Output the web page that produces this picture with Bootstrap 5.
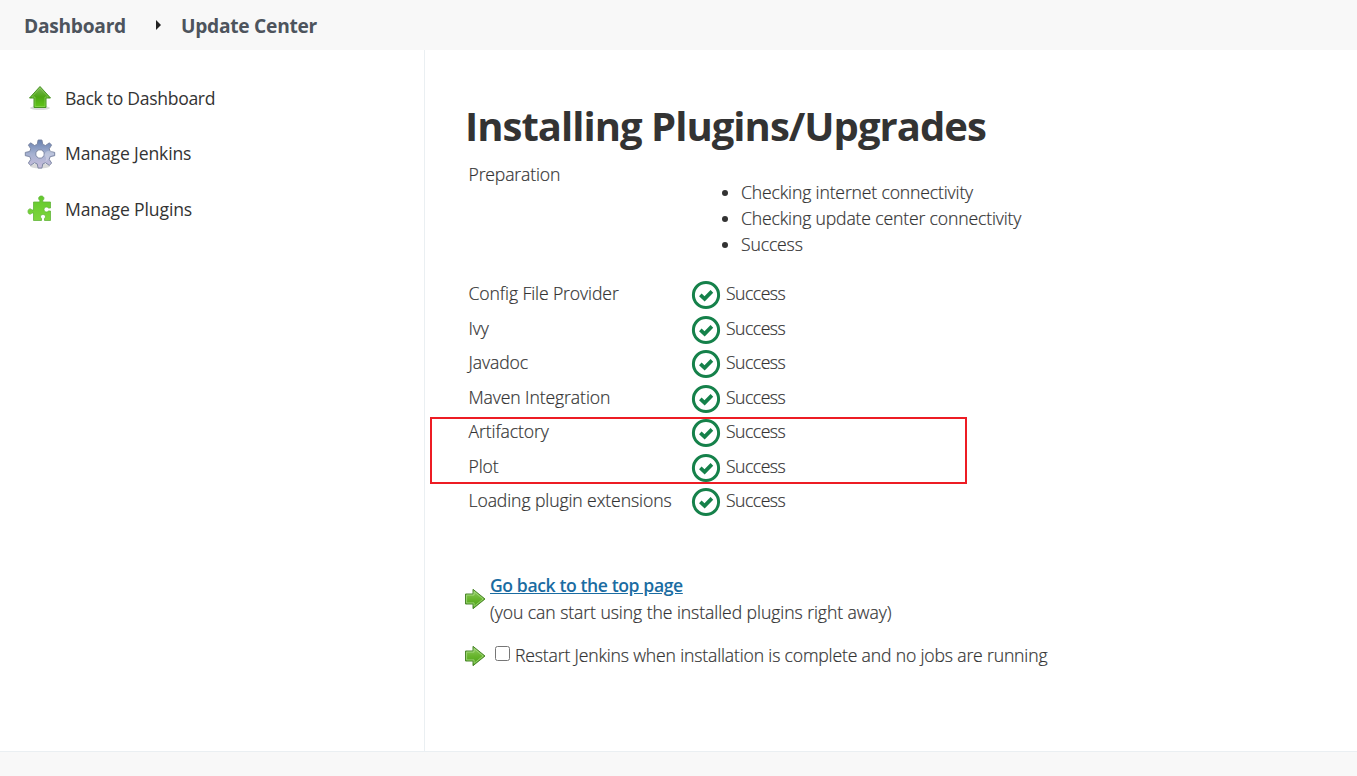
<!DOCTYPE html>
<html lang="en">
<head>
<meta charset="utf-8">
<title>Update Center [Jenkins]</title>
<meta name="viewport" content="width=device-width, initial-scale=1">
<link href="https://cdn.jsdelivr.net/npm/bootstrap@5.3.0/dist/css/bootstrap.min.css" rel="stylesheet">
<style>
body{font-family:"Open Sans","Noto Sans",sans-serif;font-size:17.6px;font-weight:300;letter-spacing:-.15px;line-height:26px;color:#333;background:#fff;height:100vh;overflow:hidden}
.content{-webkit-text-stroke:.2px}
.content h1,.next a{-webkit-text-stroke:0}
.crumbs{height:50px;background:#f8f8f8;font-size:19.2px;font-weight:700;padding:2px 0 0 24px;letter-spacing:-.27px}
.crumbs a{color:#4d545d;text-decoration:none}
.caret{margin:0 20px 0 30px;display:block;position:relative;top:-1px}
.side{width:425px;border-right:1px solid #eaeff2;padding:21px 0 0 24px}
.task{height:55.5px;color:#333;text-decoration:none;gap:9px}
.task svg{width:32px;height:32px;flex:none}
.task span{font-weight:530;margin-top:-2px}
.task:first-child span{letter-spacing:-.32px;margin-top:-1px}
.content{padding:47px 0 0 40px}
h1{font-size:40px;font-weight:700;line-height:58px;letter-spacing:-.98px;color:#333;margin:0 0 6px;white-space:nowrap}
.status{padding-left:3.5px}
.label-cell{width:223.5px;flex:none;white-space:nowrap}
.prep{height:119px}
.prep ul{margin:18px 0 0;padding-left:49px}
.job{height:34.5px}
.job .label-cell{letter-spacing:-.1px}
.job svg{width:30px;height:30px;margin:0 5px 0 -1px;flex:none}
.job span{letter-spacing:-.5px}
.marked{position:relative}
.marked::after{content:"";position:absolute;left:-38.5px;top:-1px;width:537px;height:67px;border:2px solid #ed1c24}
.next{margin-left:-1px}
.next svg{width:22px;height:22px;flex:none}
.next a{color:#1a6ca2;font-weight:600;letter-spacing:-.4px}
.next input{width:15px;height:15px;margin:0 5px 5px 9px}
.next label{padding-bottom:2px;letter-spacing:-.16px}
.top-page{margin-top:50.5px;line-height:27px;letter-spacing:-.07px}
.restart{margin-top:15.5px}
.foot{height:25px;background:#f8f8f8;border-top:1px solid #eaeff2}
</style>
</head>
<body class="d-flex flex-column">
<svg width="0" height="0" class="position-absolute" aria-hidden="true">
<defs>
<linearGradient id="leaf" x1="0" y1="0" x2="0" y2="1"><stop offset="0" stop-color="#80b85c"/><stop offset=".5" stop-color="#4ca613"/><stop offset="1" stop-color="#63c71a"/></linearGradient>
<linearGradient id="steel" x1="0" y1="0" x2="0" y2="1"><stop offset="0" stop-color="#667fae"/><stop offset=".5" stop-color="#a5b1d1"/><stop offset="1" stop-color="#c9bddb"/></linearGradient>
<linearGradient id="lime" x1="0" y1="0" x2="0" y2="1"><stop offset="0" stop-color="#62c82b"/><stop offset="1" stop-color="#7ed63d"/></linearGradient>
<linearGradient id="go" x1="0" y1="0" x2="0" y2="1"><stop offset="0" stop-color="#91cc66"/><stop offset=".5" stop-color="#68b52d"/><stop offset="1" stop-color="#46a013"/></linearGradient>
<symbol id="ok" viewBox="0 0 30 30"><circle cx="15" cy="15" r="12.6" fill="none" stroke="#15814a" stroke-width="3"/><path d="M9.300 14.900l4.300 4 7.300-7.500" fill="none" stroke="#15814a" stroke-width="3.700"/></symbol>
<symbol id="next" viewBox="0 0 22 22"><path d="M1.500 6h7.500V1.300L21 11 9 20.700V16H1.500z" fill="url(#go)" stroke="#4b862c" stroke-width="1" stroke-linejoin="round"/><path d="M2.600 7.100h7.500V3.700L19.200 11l-9.100 7.300v-3.400H2.600z" fill="none" stroke="#b5e093" stroke-opacity=".65" stroke-width="1"/></symbol>
</defs>
</svg>
<header class="crumbs d-flex align-items-center">
<a href="#">Dashboard</a>
<svg class="caret" width="5" height="10" viewBox="0 0 5 10"><path d="M0 0l5 5-5 5z" fill="#222"/></svg>
<a href="#">Update Center</a>
</header>
<div class="d-flex flex-grow-1">
<nav class="side flex-shrink-0">
<a href="#" class="task d-flex align-items-center"><svg viewBox="0 0 32 32"><ellipse cx="16" cy="25" rx="10" ry="2" fill="#000" opacity=".14"/><path d="M16 3.500L26.500 15H22v9.500H10V15H5.500z" fill="url(#leaf)" stroke="#479323" stroke-linejoin="round"/><path d="M16 5l8.300 9H21v9.500H11V14H7.700z" fill="none" stroke="#a6df77" stroke-opacity=".45"/></svg><span>Back to Dashboard</span></a>
<a href="#" class="task d-flex align-items-center"><svg viewBox="0 0 32 32"><ellipse cx="16" cy="28" rx="10" ry="2.500" fill="#000" opacity=".15"/><path fill-rule="evenodd" d="M14.100 2h3.800l.9 4.400 2.700 1.100 3.900-2.700 2.200 2.300-2.400 3.700 1.100 2.700 4.400.9v3.300l-4.400.9-1.100 2.700 2.400 3.700-2.200 2.400-3.900-2.600-2.700 1.100-.9 4.200h-3.800l-.9-4.200-2.700-1.100-3.900 2.600-2.200-2.400 2.400-3.700-1.100-2.700-4.400-.9v-3.300l4.400-.9 1.100-2.700-2.400-3.700 2.200-2.300 3.900 2.700 2.700-1.100zM16 11.800a4.200 4.200 0 1 0 0 8.400 4.200 4.200 0 0 0 0-8.400z" fill="url(#steel)" stroke="#75809d" stroke-width=".9" stroke-linejoin="round"/><path d="M20 17c1.500-4 4-5 7-4l3 2v2l-4.500 1.200-1 3L21 24c2-3 1-5-1-7z" fill="#fff" opacity=".25"/></svg><span>Manage Jenkins</span></a>
<a href="#" class="task d-flex align-items-center"><svg viewBox="0 0 32 32"><path d="M9.500 8h6.300V6.500c-2.200-1.800-1-4.500 1.500-4.500s3.700 2.700 1.500 4.500V8H26.500v6h-2c-1.500-1.800-4.500-1-4.500 1.500s3 3.300 4.500 1.500h2v9.500h-6v-2c1.800-1.500 1-4-1.500-4s-3.300 2.500-1.500 4v2h-8V19H8c-1.500 2-4 1.200-4-1.500s2.500-3.500 4-1.500h1.500z" fill="url(#lime)" stroke="#62b53a" stroke-width=".8" stroke-linejoin="round"/></svg><span>Manage Plugins</span></a>
</nav>
<main class="content flex-grow-1">
<h1>Installing Plugins/Upgrades</h1>
<div class="status">
<div class="prep d-flex"><div class="label-cell">Preparation</div>
<ul><li>Checking internet connectivity</li><li>Checking update center connectivity</li><li>Success</li></ul></div>
<div class="job d-flex"><div class="label-cell">Config File Provider</div><svg><use href="#ok"/></svg><span>Success</span></div>
<div class="job d-flex"><div class="label-cell">Ivy</div><svg><use href="#ok"/></svg><span>Success</span></div>
<div class="job d-flex"><div class="label-cell">Javadoc</div><svg><use href="#ok"/></svg><span>Success</span></div>
<div class="job d-flex"><div class="label-cell">Maven Integration</div><svg><use href="#ok"/></svg><span>Success</span></div>
<div class="marked">
<div class="job d-flex"><div class="label-cell">Artifactory</div><svg><use href="#ok"/></svg><span>Success</span></div>
<div class="job d-flex"><div class="label-cell">Plot</div><svg><use href="#ok"/></svg><span>Success</span></div>
</div>
<div class="job d-flex"><div class="label-cell">Loading plugin extensions</div><svg><use href="#ok"/></svg><span>Success</span></div>
</div>
<div class="next top-page d-flex align-items-center"><svg><use href="#next"/></svg><div class="ms-1"><a href="#">Go back to the top page</a><br>(you can start using the installed plugins right away)</div></div>
<div class="next restart d-flex align-items-center"><svg><use href="#next"/></svg><input type="checkbox" id="restart"><label for="restart">Restart Jenkins when installation is complete and no jobs are running</label></div>
</main>
</div>
<footer class="foot flex-shrink-0"></footer>
<script src="https://cdn.jsdelivr.net/npm/bootstrap@5.3.0/dist/js/bootstrap.bundle.min.js"></script>
</body>
</html>
